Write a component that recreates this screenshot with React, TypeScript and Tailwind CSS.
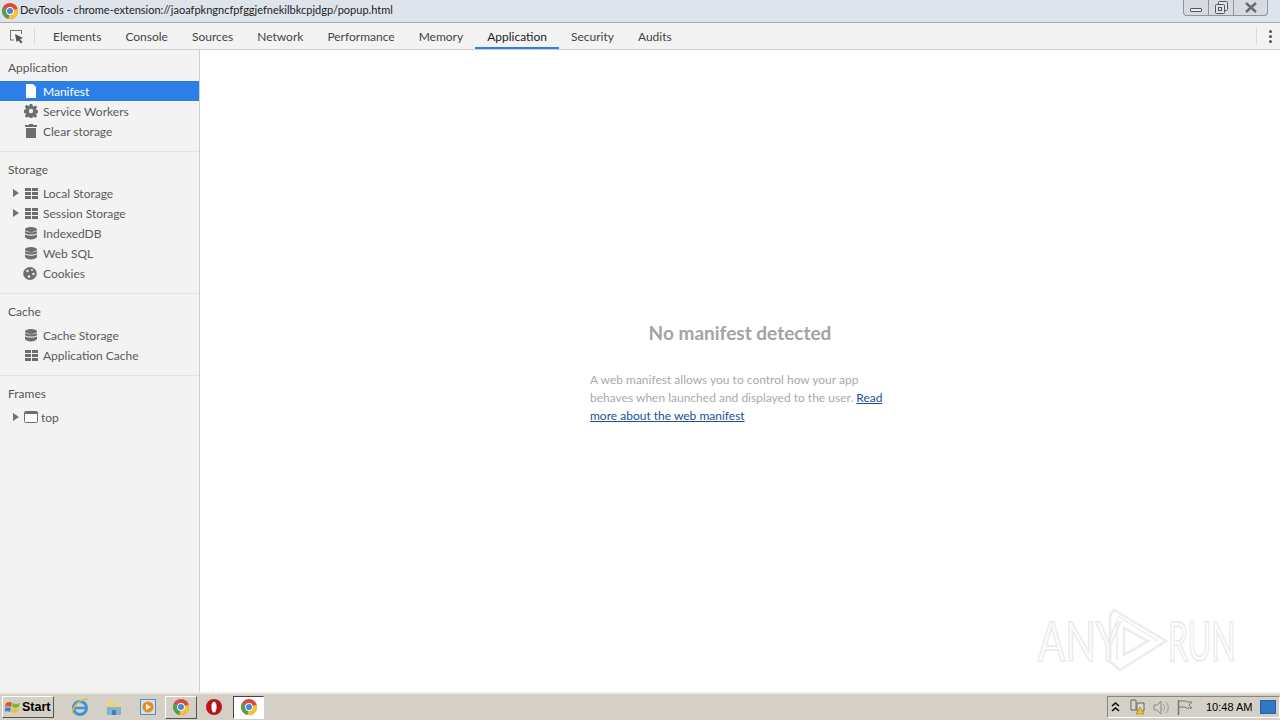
import type { ReactNode } from 'react';

const tabs = ['Elements', 'Console', 'Sources', 'Network', 'Performance', 'Memory', 'Application', 'Security', 'Audits'];

function FileIcon({ active }: { active?: boolean }) {
  return (
    <svg width="12" height="14" viewBox="0 0 12 14" className="mr-[1px]">
      <path d="M1 0h7l3 3v11H1z" fill={active ? '#fff' : '#6e6e6e'} />
    </svg>
  );
}

function GearIcon() {
  return (
    <svg width="14" height="14" viewBox="0 0 14 14">
      <path
        d="M5.8 0h2.4l.4 2 1.2.5 1.7-1.1 1.7 1.7-1.1 1.7.5 1.2 2 .4v2.4l-2 .4-.5 1.2 1.1 1.7-1.7 1.7-1.7-1.1-1.2.5-.4 2H5.8l-.4-2-1.2-.5-1.7 1.1-1.7-1.7 1.1-1.7-.5-1.2-2-.4V5.8l2-.4.5-1.2-1.1-1.7 1.7-1.7 1.7 1.1 1.2-.5z"
        fill="#6e6e6e"
      />
      <circle cx="7" cy="7" r="2.2" fill="#f3f3f3" />
    </svg>
  );
}

function TrashIcon() {
  return (
    <svg width="12" height="14" viewBox="0 0 12 14" className="mr-[1px]">
      <path d="M4 0h4v1h4v2H0V1h4zM1 4h10v10H1z" fill="#6e6e6e" />
    </svg>
  );
}

function GridIcon() {
  return (
    <svg width="13" height="11" viewBox="0 0 13 11">
      <path d="M0 0h6v3H0zM7 0h6v3H7zM0 4h6v3H0zM7 4h6v3H7zM0 8h6v3H0zM7 8h6v3H7z" fill="#6e6e6e" />
    </svg>
  );
}

function DbIcon() {
  return (
    <svg width="12" height="13" viewBox="0 0 12 13" className="mr-[1px]">
      <ellipse cx="6" cy="2.5" rx="6" ry="2.5" fill="#6e6e6e" />
      <path d="M0 4c1 1.800 11 1.800 12 0v2c-1 2-11 2-12 0zM0 7.300c1 1.800 11 1.800 12 0v2.500C11 13.400 1 13.400 0 9.800z" fill="#6e6e6e" />
    </svg>
  );
}

function CookieIcon() {
  return (
    <svg width="14" height="13" viewBox="0 0 14 13" className="mr-[1px]">
      <ellipse cx="7" cy="6.500" rx="6.800" ry="6.500" fill="#6e6e6e" />
      <circle cx="4.500" cy="4" r="1.200" fill="#f3f3f3" />
      <circle cx="9" cy="3" r="0.900" fill="#f3f3f3" />
      <circle cx="10.500" cy="7" r="1.200" fill="#f3f3f3" />
      <circle cx="6" cy="9.500" r="1.200" fill="#f3f3f3" />
    </svg>
  );
}

function FrameIcon() {
  return (
    <svg width="14" height="12" viewBox="0 0 14 12">
      <rect x="0.500" y="0.500" width="13" height="11" rx="1" fill="#fff" stroke="#6e6e6e" />
      <path d="M1 1h12v2H1z" fill="#6e6e6e" />
    </svg>
  );
}

function Arrow() {
  return (
    <svg width="6" height="8" viewBox="0 0 6 8" className="absolute left-[13px] top-[6px]">
      <path d="M0 0l6 4-6 4z" fill="#727272" />
    </svg>
  );
}

function InspectIcon() {
  return (
    <svg width="15" height="15" viewBox="0 0 15 15">
      <path d="M6 1.500H1.500V11H5" fill="none" stroke="#6e6e6e" />
      <path d="M6 1.500h6.500V5" fill="none" stroke="#6e6e6e" />
      <path d="M6 5l8 4-3 1.200 2.500 3-1.500 1.300-2.500-3L7.500 13z" fill="#555" />
    </svg>
  );
}

function ChromeIcon({ size = 16 }: { size?: number }) {
  return (
    <svg width={size} height={size} viewBox="0 0 16 16">
      <circle cx="8" cy="8" r="8" fill="#e0493a" />
      <path d="M8 8L1.100 4.200A8 8 0 0 0 6.500 15.800z" fill="#4aa54e" />
      <path d="M8 8l7.600-2.300A8 8 0 0 1 6.500 15.800z" fill="#f5c52f" />
      <circle cx="8" cy="8" r="3.900" fill="#fff" />
      <circle cx="8" cy="8" r="3" fill="#4a86e0" />
    </svg>
  );
}

function SideRow({ icon, label, active, arrow, tight }: { icon: ReactNode; label: string; active?: boolean; arrow?: boolean; tight?: boolean }) {
  return (
    <div className={`relative flex h-5 items-center ${active ? 'bg-[#2d7fe8] text-white' : 'text-[#5a5a5a]'}`}>
      {arrow && <Arrow />}
      <div className="flex w-[38px] shrink-0 justify-end">{icon}</div>
      <span className={`pt-[2px] ${tight ? 'ml-[3px]' : 'ml-[5px]'}`}>{label}</span>
    </div>
  );
}

function Section({ title, last, children }: { title: string; last?: boolean; children: ReactNode }) {
  return (
    <div className={last ? '' : 'border-b border-[#e4e4e4] pb-[10px]'}>
      <div className="flex h-[31px] items-center pl-2 pt-[5px] text-[#555]">{title}</div>
      {children}
    </div>
  );
}

function Watermark() {
  return (
    <div className="pointer-events-none absolute bottom-[20px] left-[1038px] flex items-center">
      <span className="w-[66px] origin-left scale-x-[0.73] whitespace-nowrap text-[55px] leading-none text-transparent [-webkit-text-stroke:2px_#ececec]">ANY</span>
      <svg width="64" height="64" viewBox="0 0 64 64">
        <path d="M10 2l52 31-46 29-10-8V8zM20 20l24 13-24 14z" fill="none" stroke="#ececec" strokeWidth="2.500" />
        <path d="M13 10v42M14 8l40 25" fill="none" stroke="#f1f1f1" strokeWidth="2" />
      </svg>
      <span className="w-[64px] origin-left scale-x-[0.58] whitespace-nowrap text-[55px] leading-none text-transparent [-webkit-text-stroke:2px_#ececec]">RUN</span>
    </div>
  );
}

export default function App() {
  return (
    <div className="flex h-[720px] w-[1280px] flex-col overflow-hidden bg-white font-['Lato','Open_Sans',sans-serif] text-xs">
      {/* Title bar */}
      <div className="flex h-[23px] shrink-0 items-start justify-between border-b border-[#a9a9a9] bg-[#dfe3ec]">
        <div className="flex h-[21px] items-center pl-[2px] text-[11px] text-[#222]">
          <ChromeIcon />
          <span className="ml-[2px]">DevTools - chrome-extension://jaoafpkngncfpfggjefnekilbkcpjdgp/popup.html</span>
        </div>
        <div className="mr-3 flex h-4 w-[85px] overflow-hidden rounded-b-[4px] border border-t-0 border-[#8e939c] bg-[#d6dae3]">
          <div className="flex w-[25px] items-center justify-center border-r border-[#8e939c]">
            <div className="mt-[4px] h-[4px] w-[12px] rounded-[1px] border border-[#555] bg-[#eee]" />
          </div>
          <div className="flex w-[25px] items-center justify-center border-r border-[#8e939c]">
            <svg width="13" height="13" viewBox="0 0 13 13">
              <rect x="3.500" y="0.500" width="9" height="9" rx="1" fill="#dfe3ec" stroke="#555" />
              <rect x="0.500" y="3.500" width="9" height="9" rx="1" fill="#dfe3ec" stroke="#555" />
              <rect x="3.500" y="6.500" width="3" height="3" fill="none" stroke="#555" />
            </svg>
          </div>
          <div className="flex flex-1 items-center justify-center">
            <svg width="14" height="11" viewBox="0 0 14 11">
              <path d="M2 1l10 9M12 1L2 10" stroke="#6a6a6a" strokeWidth="2.400" fill="none" />
            </svg>
          </div>
        </div>
      </div>

      {/* DevTools toolbar */}
      <div className="flex h-[27px] shrink-0 items-stretch border-b border-[#cdcdcd] bg-[#f3f3f3] text-[#444]">
        <div className="flex w-[34px] items-center justify-center pr-[1px]">
          <InspectIcon />
        </div>
        <div className="my-[4px] w-px bg-[#dadada]" />
        <div className="ml-[6px] flex">
          {tabs.map((t) => (
            <div key={t} className={`flex items-center px-3 ${t === 'Application' ? 'border-b-2 border-[#2d7fe8] pt-[3px] text-[#222]' : 'pt-[1px]'}`}>
              {t}
            </div>
          ))}
        </div>
        <div className="ml-auto flex items-center">
          <div className="my-[4px] h-[18px] w-px bg-[#dadada]" />
          <div className="flex w-[23px] flex-col items-center gap-[2px] pl-[3px]">
            <div className="h-[3px] w-[3px] rounded-full bg-[#555]" />
            <div className="h-[3px] w-[3px] rounded-full bg-[#555]" />
            <div className="h-[3px] w-[3px] rounded-full bg-[#555]" />
          </div>
        </div>
      </div>

      {/* Body */}
      <div className="relative flex min-h-0 flex-1">
        <div className="w-[200px] shrink-0 border-r border-[#d0d0d0] bg-[#f3f3f3]">
          <Section title="Application">
            <SideRow active icon={<FileIcon active />} label="Manifest" />
            <SideRow icon={<GearIcon />} label="Service Workers" />
            <SideRow icon={<TrashIcon />} label="Clear storage" />
          </Section>
          <Section title="Storage">
            <SideRow arrow icon={<GridIcon />} label="Local Storage" />
            <SideRow arrow icon={<GridIcon />} label="Session Storage" />
            <SideRow icon={<DbIcon />} label="IndexedDB" />
            <SideRow icon={<DbIcon />} label="Web SQL" />
            <SideRow icon={<CookieIcon />} label="Cookies" />
          </Section>
          <Section title="Cache">
            <SideRow icon={<DbIcon />} label="Cache Storage" />
            <SideRow icon={<GridIcon />} label="Application Cache" />
          </Section>
          <Section title="Frames" last>
            <SideRow arrow icon={<FrameIcon />} label="top" tight />
          </Section>
        </div>
        <div className="flex flex-1 flex-col items-center justify-center pt-[4px]">
          <div className="text-[19px] font-bold leading-6 text-[#a3a3a3]">No manifest detected</div>
          <p className="mt-[26px] w-[300px] leading-[18px] text-[#aaa]">
            A web manifest allows you to control how your app behaves when launched and displayed to the user.{' '}
            <a className="text-[#1a4f94] underline">Read more about the web manifest</a>
          </p>
        </div>
        <Watermark />
      </div>

      {/* Taskbar */}
      <div className="flex h-7 shrink-0 items-center border-t-2 border-[#ece9e1] bg-[#d4d0c8] font-['Liberation_Sans',sans-serif]">
        <div className="ml-[2px] flex h-[22px] w-[52px] items-center border border-b-[#555] border-l-white border-r-[#555] border-t-white bg-[#d4d0c8] pl-[2px] text-[12.500px] font-bold text-black">
          <svg width="16" height="15" viewBox="0 0 16 15">
            <path d="M1 3c2-1.500 4-1.500 6 0L6 7C4 6 2.500 6 0 7z" fill="#e2552b" />
            <path d="M8 3c2 1.200 4 1.200 7 0l-1 4c-2 1-4 1-7 0z" fill="#7bb53a" />
            <path d="M0 8c2-1 4-1 6 0l-1 4c-2-1-3-1-6 0z" fill="#3f86d8" />
            <path d="M7 8c2 1 4 1 7 0l-1 4c-3 1-5 1-7 0z" fill="#efc02f" />
          </svg>
          <span className="ml-[1px]">Start</span>
        </div>
        <div className="ml-[9px] flex h-full items-center">
          <div className="flex w-[34px] justify-center">
            <svg width="18" height="18" viewBox="0 0 18 18">
              <circle cx="9" cy="10" r="6.500" fill="none" stroke="#3f93d8" strokeWidth="3" />
              <path d="M3 10h12" stroke="#3f93d8" strokeWidth="2.500" />
              <path d="M1 15C3 6 10 1 17 1" fill="none" stroke="#e3bd3c" strokeWidth="1.500" />
            </svg>
          </div>
          <div className="flex w-[34px] justify-center">
            <svg width="16" height="18" viewBox="0 0 16 18">
              <path d="M1 3h5l1 2h8v12H1z" fill="#ecd27d" />
              <path d="M1 9h14v8H1z" fill="#7fb4d8" />
              <path d="M6 17v-5h4v5z" fill="#4a7fa8" />
            </svg>
          </div>
          <div className="flex w-[34px] justify-center">
            <svg width="16" height="16" viewBox="0 0 16 16">
              <rect x="0.500" y="0.500" width="15" height="15" fill="#cfe0f0" stroke="#5a8fc0" />
              <circle cx="8" cy="8" r="5.500" fill="#f08a1d" />
              <path d="M6 5l5 3-5 3z" fill="#fff" />
            </svg>
          </div>
          <div className="flex h-[23px] w-[32px] items-center justify-center border border-b-[#555] border-l-white border-r-[#555] border-t-white">
            <ChromeIcon />
          </div>
          <div className="flex w-[34px] justify-center">
            <svg width="16" height="16" viewBox="0 0 16 16">
              <circle cx="8" cy="8" r="8" fill="#b8141a" />
              <ellipse cx="8" cy="8" rx="2.600" ry="5.500" fill="#fff" />
            </svg>
          </div>
          <div className="ml-[2px] flex h-[23px] w-[31px] items-center justify-center border border-b-white border-l-[#444] border-r-white border-t-[#444] bg-white">
            <ChromeIcon />
          </div>
        </div>
        <div className="ml-auto flex h-[22px] w-[173px] items-center border border-b-white border-l-[#8a8780] border-r-white border-t-[#8a8780] text-black">
          <svg width="9" height="10" viewBox="0 0 9 10" className="ml-[3px] shrink-0">
            <path d="M1 4l3.500-3L8 4M1 9l3.500-3L8 9" fill="none" stroke="#000" strokeWidth="1.500" />
          </svg>
          <svg width="17" height="17" viewBox="0 0 17 17" className="ml-[9px] shrink-0">
            <path d="M2 1h5v10H2zM8 4h7v8H8z" fill="#d8d8d0" stroke="#666" />
            <path d="M11 8l4 7H7z" fill="#f2c21d" stroke="#8a6d00" strokeWidth="0.500" />
          </svg>
          <svg width="17" height="15" viewBox="0 0 17 15" className="ml-[7px] shrink-0">
            <path d="M1 5h3l4-4v13l-4-4H1z" fill="none" stroke="#8a8a8a" />
            <path d="M10 4c2 2 2 5 0 7M13 2c3 3 3 8 0 11" fill="none" stroke="#9a9a9a" />
          </svg>
          <svg width="16" height="16" viewBox="0 0 16 16" className="ml-[7px] shrink-0">
            <path d="M1.500 1v15" stroke="#777" strokeWidth="1.500" />
            <path d="M2 2h7l1 1h5l-3 3 3 3H9L8 8H2" fill="none" stroke="#777" />
          </svg>
          <span className="ml-[13px] whitespace-nowrap text-[11px]">10:48 AM</span>
          <div className="ml-[8px] h-[14px] w-[16px] shrink-0 border border-[#2b5f9e] bg-[#2d78c8]" />
        </div>
      </div>
    </div>
  );
}
